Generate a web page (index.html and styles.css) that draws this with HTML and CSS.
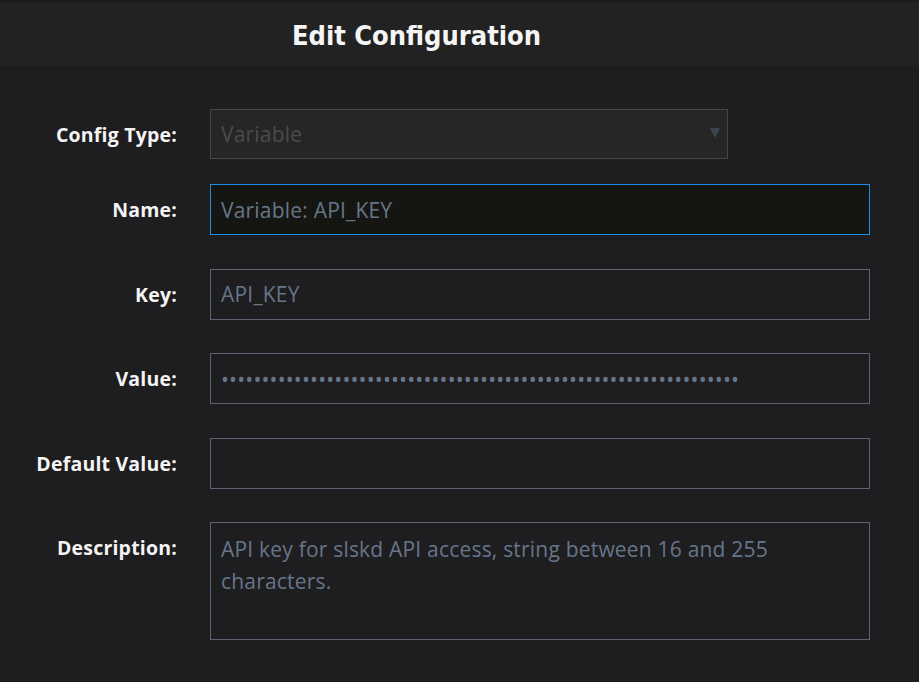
FILE: index.html
```html
<!DOCTYPE html>
<html lang="en">
<head>
  <meta charset="UTF-8">
  <meta name="viewport" content="width=device-width, initial-scale=1.0">
  <title>Edit Configuration</title>
  <link rel="stylesheet" href="styles.css">
</head>
<body>

  <div class="modal">
    <div class="modal-header">
      <h2>Edit Configuration</h2>
    </div>

    <form class="config-form">
      <div class="form-row">
        <label for="cfg-type">Config Type:</label>
        <div class="select-wrap">
          <select id="cfg-type" class="field field-select" disabled>
            <option>Variable</option>
          </select>
          <span class="select-arrow"></span>
        </div>
      </div>

      <div class="form-row">
        <label for="cfg-name">Name:</label>
        <input type="text" id="cfg-name" class="field focused" value="Variable: API_KEY">
      </div>

      <div class="form-row">
        <label for="cfg-key">Key:</label>
        <input type="text" id="cfg-key" class="field" value="API_KEY">
      </div>

      <div class="form-row">
        <label for="cfg-value">Value:</label>
        <input type="password" id="cfg-value" class="field" value="xxxxxxxxxxxxxxxxxxxxxxxxxxxxxxxxxxxxxxxxxxxxxxxxxxxxxxxxxxxxxxxx">
      </div>

      <div class="form-row">
        <label for="cfg-default">Default Value:</label>
        <input type="text" id="cfg-default" class="field">
      </div>

      <div class="form-row top">
        <label for="cfg-desc">Description:</label>
        <textarea id="cfg-desc" class="field field-area">API key for slskd API access, string between 16 and 255 characters.</textarea>
      </div>
    </form>
  </div>

</body>
</html>
```

FILE: styles.css
```css
* {
  box-sizing: border-box;
  margin: 0;
  padding: 0;
}

html, body {
  overflow: hidden;
}

body {
  background: #1e1d1f;
  font-family: 'Open Sans', 'Noto Sans', sans-serif;
  color: #f2f2f2;
  height: 100vh;
}

.modal-header {
  height: 66px;
  background: #222222;
  border-top: 2px solid #1b1b1b;
  padding-right: 86px;
  display: flex;
  align-items: center;
  justify-content: center;
}

.modal-header h2 {
  font-family: 'DejaVu Sans Condensed', 'DejaVu Sans', sans-serif;
  font-size: 27px;
  font-weight: 700;
  color: #f5f5f5;
  padding-top: 3px;
}

.config-form {
  padding: 43px 49px 0 0;
  display: flex;
  flex-direction: column;
  gap: 33.5px;
}

.form-row {
  display: flex;
  align-items: center;
  gap: 33px;
}

.form-row.top {
  align-items: flex-start;
}

.form-row.top label {
  padding-top: 12px;
}

.form-row:first-child {
  margin-bottom: -8.5px;
}

.form-row label {
  width: 177px;
  flex-shrink: 0;
  text-align: right;
  font-size: 19.5px;
  line-height: 27px;
  letter-spacing: 0.2px;
  font-weight: 700;
  color: #f4f4f4;
}

.field {
  flex: 1;
  height: 51px;
  padding: 0 10px;
  background: transparent;
  border: 1px solid #5b6472;
  border-radius: 0;
  color: #66768a;
  font-family: 'Open Sans', 'Noto Sans', sans-serif;
  font-size: 21px;
  letter-spacing: 0.2px;
  outline: none;
}

.field.focused {
  background: #151612;
  border-color: #1e8be6;
}

.select-wrap {
  position: relative;
  width: 518px;
}

.field-select {
  width: 100%;
  height: 50px;
  appearance: none;
  -webkit-appearance: none;
  background: #262626;
  border-color: #474747;
  color: #4b4b4b;
  opacity: 1;
}

.select-arrow {
  position: absolute;
  right: 8px;
  top: 19px;
  width: 0;
  height: 0;
  border-left: 5px solid transparent;
  border-right: 5px solid transparent;
  border-top: 10px solid #3d4552;
}

.field-area {
  height: 118px;
  padding: 10px 10px;
  line-height: 32px;
  resize: none;
  overflow: hidden;
}
```
